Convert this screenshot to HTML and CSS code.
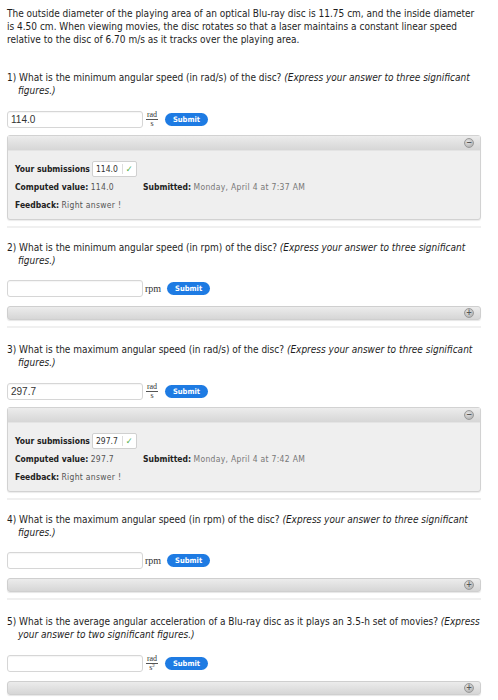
FILE: index.html
```html
<!DOCTYPE html>
<html>
<head>
<meta charset="utf-8">
<link rel="stylesheet" href="styles.css">
</head>
<body>
<div class="page">
  <p class="intro">The outside diameter of the playing area of an optical Blu-ray disc is 11.75 cm, and the inside diameter is 4.50 cm. When viewing movies, the disc rotates so that a laser maintains a constant linear speed relative to the disc of 6.70 m/s as it tracks over the playing area.</p>

  <div class="question open">
    <p class="qtext">1) What is the minimum angular speed (in rad/s) of the disc? <em>(Express your answer to three significant figures.)</em></p>
    <div class="answer">
      <div class="input">114.0</div>
      <span class="frac"><span class="num">rad</span><span class="den">s</span></span>
      <span class="submit">Submit</span>
    </div>
    <div class="panel">
      <div class="panel-head"><span class="toggle">−</span></div>
      <div class="panel-body">
        <div class="row"><b>Your submissions</b><span class="sub-box"><span class="sub-val">114.0</span><span class="check">✓</span></span></div>
        <div class="row"><span class="col1"><b>Computed value:</b> <span class="val">114.0</span></span><span><b>Submitted:</b> <span class="date">Monday, April 4 at 7:37 AM</span></span></div>
        <div class="row"><b>Feedback:</b> <span class="val">Right answer !</span></div>
      </div>
    </div>
  </div>

  <div class="question closed">
    <p class="qtext">2) What is the minimum angular speed (in rpm) of the disc? <em>(Express your answer to three significant figures.)</em></p>
    <div class="answer">
      <div class="input"></div>
      <span class="unit">rpm</span>
      <span class="submit">Submit</span>
    </div>
    <div class="bar"><span class="toggle">+</span></div>
  </div>

  <div class="question open">
    <p class="qtext">3) What is the maximum angular speed (in rad/s) of the disc? <em>(Express your answer to three significant figures.)</em></p>
    <div class="answer">
      <div class="input">297.7</div>
      <span class="frac"><span class="num">rad</span><span class="den">s</span></span>
      <span class="submit">Submit</span>
    </div>
    <div class="panel">
      <div class="panel-head"><span class="toggle">−</span></div>
      <div class="panel-body">
        <div class="row"><b>Your submissions</b><span class="sub-box"><span class="sub-val">297.7</span><span class="check">✓</span></span></div>
        <div class="row"><span class="col1"><b>Computed value:</b> <span class="val">297.7</span></span><span><b>Submitted:</b> <span class="date">Monday, April 4 at 7:42 AM</span></span></div>
        <div class="row"><b>Feedback:</b> <span class="val">Right answer !</span></div>
      </div>
    </div>
  </div>

  <div class="question closed">
    <p class="qtext">4) What is the maximum angular speed (in rpm) of the disc? <em>(Express your answer to three significant figures.)</em></p>
    <div class="answer">
      <div class="input"></div>
      <span class="unit">rpm</span>
      <span class="submit">Submit</span>
    </div>
    <div class="bar"><span class="toggle">+</span></div>
  </div>

  <div class="question closed last">
    <p class="qtext">5) What is the average angular acceleration of a Blu-ray disc as it plays an 3.5-h set of movies? <em>(Express your answer to two significant figures.)</em></p>
    <div class="answer">
      <div class="input"></div>
      <span class="frac"><span class="num">rad</span><span class="den">s<sup>2</sup></span></span>
      <span class="submit">Submit</span>
    </div>
    <div class="bar"><span class="toggle">+</span></div>
  </div>
</div>
</body>
</html>
```

FILE: styles.css
```css
html, body {
  margin: 0;
  padding: 0;
  background: #ffffff;
}
body {
  font-family: "DejaVu Sans Condensed", "DejaVu Sans", sans-serif;
  font-stretch: condensed;
  font-size: 10px;
  line-height: 13px;
  color: #1e1e1e;
}
.page {
  width: 474px;
  padding: 7px 0 0 7px;
}
p { margin: 0; }
.intro {
  margin-bottom: 25px;
  padding-right: 4px;
}
.question {
  border-bottom: 2px solid #f0f0f0;
  padding-bottom: 6px;
}
.question.open { margin-bottom: 13px; }
.question.closed { margin-bottom: 15px; }
.question.last { border-bottom: none; }
.qtext {
  padding-left: 11px;
  text-indent: -11px;
}
.qtext em { font-style: italic; }
.answer {
  display: flex;
  align-items: center;
  margin-top: 13.5px;
  height: 17px;
}
.input {
  width: 131px;
  height: 15px;
  border: 1px solid #d6d6d6;
  border-radius: 3px;
  font-family: "Liberation Sans", Arial, sans-serif;
  font-size: 10px;
  line-height: 15px;
  padding-left: 3px;
  color: #333;
  box-sizing: content-box;
  box-shadow: inset 0 1px 1px rgba(0,0,0,0.04);
}
.frac {
  display: inline-flex;
  flex-direction: column;
  align-items: center;
  font-family: "Liberation Serif", "Times New Roman", serif;
  font-size: 8px;
  line-height: 7px;
  margin-left: 3px;
  width: 12px;
  color: #333;
}
.frac .num { border-bottom: 1px solid #555; padding: 0 1px 1px; }
.frac .den { line-height: 8px; }
.frac sup { font-size: 5px; vertical-align: 3px; line-height: 0; }
.unit {
  font-family: "Liberation Serif", "Times New Roman", serif;
  font-size: 10px;
  margin-left: 2px;
  color: #333;
}
.submit {
  display: inline-block;
  background: #1e7be3;
  color: #fff;
  font-family: "DejaVu Sans", sans-serif;
  font-weight: bold;
  font-size: 7.5px;
  line-height: 13px;
  height: 13px;
  width: 43px;
  text-align: center;
  border-radius: 7px;
  margin-left: 7px;
}
.unit + .submit { margin-left: 6px; }
.panel {
  margin-top: 7px;
  border: 1px solid #d2d2d2;
  border-radius: 3px;
  background: #efefef;
  box-shadow: 0 1px 1px rgba(0,0,0,0.08);
}
.panel-head, .bar {
  background: linear-gradient(#ececec, #d6d6d6);
  display: flex;
  justify-content: flex-end;
  align-items: center;
  padding-right: 6px;
}
.panel-head {
  height: 14px;
  border-bottom: 1px solid #e4e4e4;
}
.bar {
  margin-top: 9px;
  border: 1px solid #cfcfcf;
  border-radius: 3px;
  height: 12px;
  box-shadow: 0 1px 1px rgba(0,0,0,0.1);
}
.toggle {
  display: inline-flex;
  width: 8px;
  height: 8px;
  border-radius: 50%;
  background: radial-gradient(circle at 40% 35%, #e6e6e6, #a5a5a5);
  border: 1px solid #9a9a9a;
  color: #555;
  font-size: 8px;
  line-height: 8px;
  justify-content: center;
  align-items: center;
  font-family: "DejaVu Sans", sans-serif;
  font-weight: bold;
}
.panel-body {
  padding: 9px 7px 5px;
  font-size: 8.5px;
}
.panel-body .row {
  height: 18px;
  line-height: 18px;
  white-space: nowrap;
}
.panel-body b { font-weight: bold; color: #222; }
.col1 { display: inline-block; width: 128px; }
.val { color: #555; letter-spacing: 0.3px; }
.date { color: #777; letter-spacing: 0.3px; }
.sub-box {
  display: inline-flex;
  align-items: center;
  vertical-align: middle;
  background: #fff;
  border: 1px solid #d0d0d0;
  border-radius: 2px;
  height: 14px;
  margin-left: 2px;
  padding: 0 3px;
  line-height: 14px;
}
.sub-val { color: #333; padding-right: 4px; border-right: 1px solid #ddd; margin-right: 3px; line-height: 10px; }
.check { color: #4cae4c; font-size: 9px; }
```
